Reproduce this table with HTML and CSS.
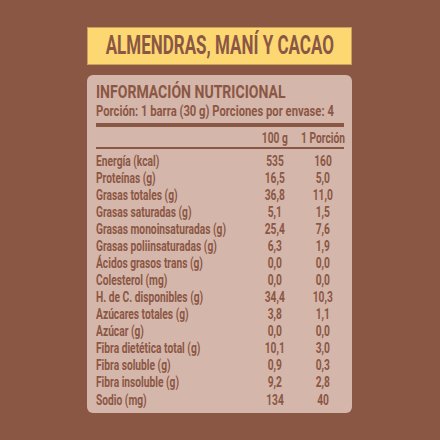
FILE: index.html
```html
<!DOCTYPE html>
<html lang="es">
<head>
<meta charset="utf-8">
<link rel="stylesheet" href="styles.css">
</head>
<body>
<div class="page">
  <div class="banner"><span class="sx banner-text">ALMENDRAS, MANÍ Y CACAO</span></div>
  <div class="panel">
    <div class="title"><span class="sx">INFORMACIÓN NUTRICIONAL</span></div>
    <div class="portion"><span class="sx">Porción: 1 barra (30 g) Porciones por envase: 4</span></div>
    <div class="thick"></div>
    <div class="row head"><span></span><span class="v"><span class="sx">100 g</span></span><span class="v"><span class="sx">1 Porción</span></span></div>
    <div class="thin"></div>
    <div class="rows">
      <div class="row"><span><span class="sx">Energía (kcal)</span></span><span class="v"><span class="sx">535</span></span><span class="v"><span class="sx">160</span></span></div>
      <div class="row"><span><span class="sx">Proteínas (g)</span></span><span class="v"><span class="sx">16,5</span></span><span class="v"><span class="sx">5,0</span></span></div>
      <div class="row"><span><span class="sx">Grasas totales (g)</span></span><span class="v"><span class="sx">36,8</span></span><span class="v"><span class="sx">11,0</span></span></div>
      <div class="row"><span><span class="sx">Grasas saturadas (g)</span></span><span class="v"><span class="sx">5,1</span></span><span class="v"><span class="sx">1,5</span></span></div>
      <div class="row"><span><span class="sx">Grasas monoinsaturadas (g)</span></span><span class="v"><span class="sx">25,4</span></span><span class="v"><span class="sx">7,6</span></span></div>
      <div class="row"><span><span class="sx">Grasas poliinsaturadas (g)</span></span><span class="v"><span class="sx">6,3</span></span><span class="v"><span class="sx">1,9</span></span></div>
      <div class="row"><span><span class="sx">Ácidos grasos trans (g)</span></span><span class="v"><span class="sx">0,0</span></span><span class="v"><span class="sx">0,0</span></span></div>
      <div class="row"><span><span class="sx">Colesterol (mg)</span></span><span class="v"><span class="sx">0,0</span></span><span class="v"><span class="sx">0,0</span></span></div>
      <div class="row"><span><span class="sx">H. de C. disponibles (g)</span></span><span class="v"><span class="sx">34,4</span></span><span class="v"><span class="sx">10,3</span></span></div>
      <div class="row"><span><span class="sx">Azúcares totales (g)</span></span><span class="v"><span class="sx">3,8</span></span><span class="v"><span class="sx">1,1</span></span></div>
      <div class="row"><span><span class="sx">Azúcar (g)</span></span><span class="v"><span class="sx">0,0</span></span><span class="v"><span class="sx">0,0</span></span></div>
      <div class="row"><span><span class="sx">Fibra dietética total (g)</span></span><span class="v"><span class="sx">10,1</span></span><span class="v"><span class="sx">3,0</span></span></div>
      <div class="row"><span><span class="sx">Fibra soluble (g)</span></span><span class="v"><span class="sx">0,9</span></span><span class="v"><span class="sx">0,3</span></span></div>
      <div class="row"><span><span class="sx">Fibra insoluble (g)</span></span><span class="v"><span class="sx">9,2</span></span><span class="v"><span class="sx">2,8</span></span></div>
      <div class="row"><span><span class="sx">Sodio (mg)</span></span><span class="v"><span class="sx">134</span></span><span class="v"><span class="sx">40</span></span></div>
    </div>
  </div>
</div>
</body>
</html>
```

FILE: styles.css
```css
html, body {
  margin: 0;
  padding: 0;
  background: #8b5745;
}
.page {
  width: 440px;
  height: 440px;
  box-sizing: border-box;
  padding: 27px 88px 0 87px;
  display: flex;
  flex-direction: column;
  gap: 10px;
  font-family: Roboto, "Liberation Sans", sans-serif;
  font-weight: 700;
  color: #8b5745;
}
.sx {
  display: inline-block;
  white-space: nowrap;
  transform: scaleX(0.73);
  transform-origin: left center;
}
.banner {
  height: 38px;
  flex: none;
  box-sizing: border-box;
  background: #fdd872;
  border: 1px solid #c9a05c;
  display: flex;
  align-items: center;
  justify-content: center;
}
.banner .banner-text {
  font-size: 25px;
  line-height: 30px;
  transform: scaleX(0.68);
  transform-origin: center;
}
.panel {
  height: 338px;
  flex: none;
  box-sizing: border-box;
  background: #d5b6aa;
  border-radius: 6px;
  padding: 6.85px 8px 0 9px;
  display: flex;
  flex-direction: column;
}
.title {
  font-size: 18px;
  line-height: 20px;
  white-space: nowrap;
}
.title .sx {
  transform: scaleX(0.78);
}
.portion {
  font-size: 15px;
  line-height: 18px;
  white-space: nowrap;
}
.portion .sx {
  transform: scaleX(0.75);
}
.thick {
  height: 4px;
  background: #8b5745;
  margin-top: 3.1px;
  flex: none;
}
.thin {
  height: 2px;
  background: #8b5745;
  margin: 0.3px 0 3.7px;
  flex: none;
}
.row {
  display: grid;
  grid-template-columns: minmax(0, 1fr) 48px 42px;
  column-gap: 3px;
  font-size: 14px;
  line-height: 17.07px;
  white-space: nowrap;
}
.row .v {
  display: flex;
  justify-content: center;
}
.row .v .sx {
  transform-origin: center;
}
.head {
  margin-top: 2.7px;
}
```
